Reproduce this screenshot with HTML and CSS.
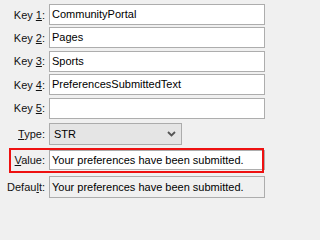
FILE: index.html
```html
<!DOCTYPE html>
<html>
<head>
<meta charset="utf-8">
<link rel="stylesheet" href="styles.css">
</head>
<body>
<div class="form">
  <div class="row"><label class="lbl">Key <u>1</u>:</label><div class="field">CommunityPortal</div></div>
  <div class="row"><label class="lbl">Key <u>2</u>:</label><div class="field">Pages</div></div>
  <div class="row"><label class="lbl">Key <u>3</u>:</label><div class="field">Sports</div></div>
  <div class="row"><label class="lbl">Key <u>4</u>:</label><div class="field">PreferencesSubmittedText</div></div>
  <div class="row"><label class="lbl">Key <u>5</u>:</label><div class="field"></div></div>
  <div class="row row-type"><label class="lbl"><u>T</u>ype:</label>
    <div class="select"><span>STR</span>
      <svg class="chev" width="9" height="6" viewBox="0 0 9 6"><path d="M1 1 L4.5 4.5 L8 1" fill="none" stroke="#555" stroke-width="1.8"/></svg>
    </div>
  </div>
  <div class="row row-value"><label class="lbl"><u>V</u>alue:</label><div class="field">Your preferences have been submitted.</div></div>
  <div class="row row-default"><label class="lbl">Defau<u>l</u>t:</label><div class="field field-ro">Your preferences have been submitted.</div></div>
</div>
</body>
</html>
```
FILE: styles.css
```css
html, body {
  margin: 0;
  padding: 0;
  background: #f0f0f0;
}
body {
  width: 266px;
  height: 202px;
  overflow: hidden;
  font-family: "Liberation Sans", Arial, sans-serif;
  font-size: 11px;
  color: #000;
}
.form {
  display: flex;
  flex-direction: column;
  padding: 4px 1px 0 0;
}
.row {
  display: grid;
  grid-template-columns: 45px 1fr;
  column-gap: 4px;
  align-items: center;
  height: 21px;
  margin-bottom: 2.4px;
}
.lbl {
  text-align: right;
  color: #111;
  white-space: nowrap;
}
.lbl u {
  text-decoration-thickness: 1px;
  text-underline-offset: 1px;
}
.field {
  box-sizing: border-box;
  height: 21px;
  border: 1px solid #adadad;
  background: #fff;
  padding: 0 2px;
  line-height: 19px;
  white-space: nowrap;
  overflow: hidden;
}
.row-type {
  margin-top: 2px;
  margin-bottom: 6px;
}
.select {
  justify-self: start;
  display: flex;
  align-items: center;
  justify-content: space-between;
  box-sizing: border-box;
  width: 133px;
  height: 22px;
  border: 1px solid #acacac;
  background: #e5e5e5;
  padding: 0 5px 0 4px;
}
.chev {
  display: block;
}
.row-value {
  position: relative;
  height: 20px;
}
.row-value .field {
  height: 20px;
  line-height: 18px;
}
.row-value::after {
  content: "";
  position: absolute;
  left: 9px;
  right: 1px;
  top: -2px;
  bottom: -3px;
  border: 2px solid #ee1111;
  pointer-events: none;
}
.row-default {
  margin-top: 4px;
  height: 22px;
}
.field-ro {
  height: 22px;
  line-height: 20px;
  background: #f0f0f0;
}
```
